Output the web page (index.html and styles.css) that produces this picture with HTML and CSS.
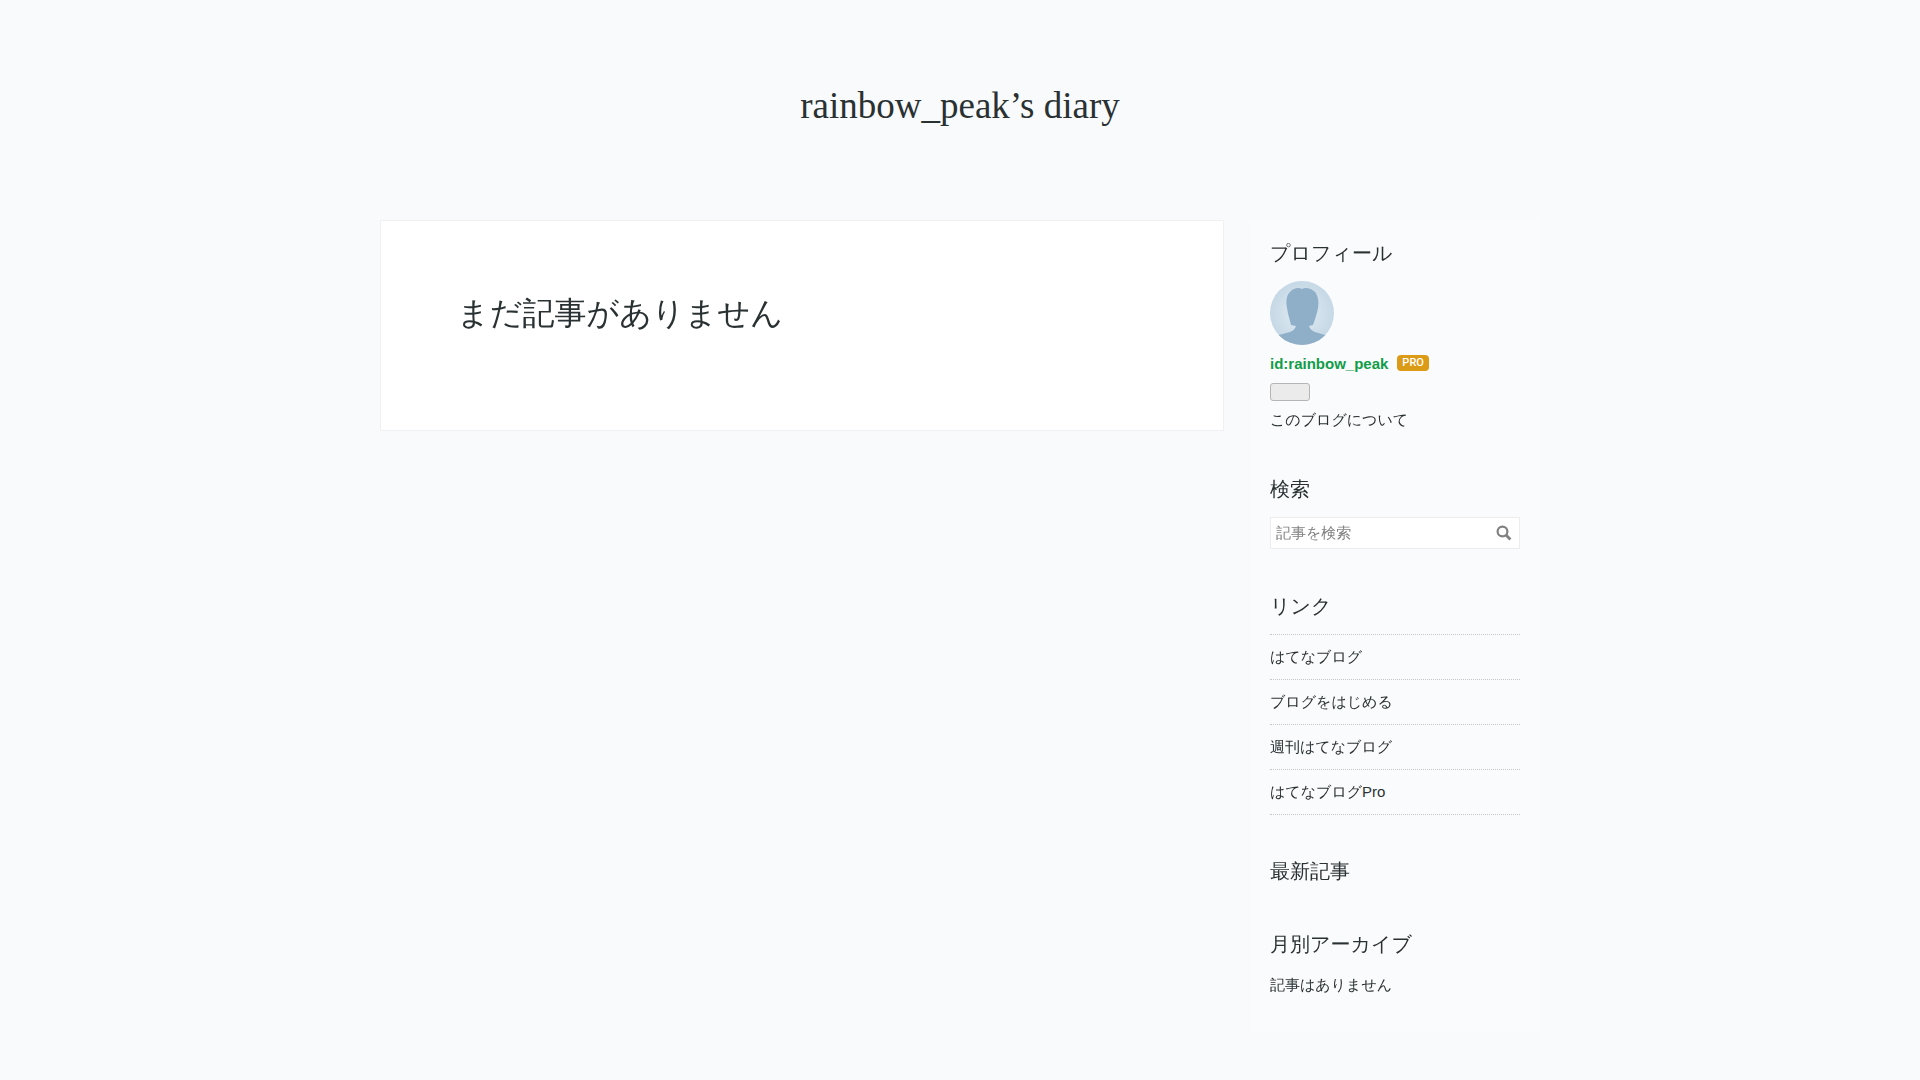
FILE: index.html
```html
<!DOCTYPE html>
<html lang="ja">

<head>
    <meta charset="UTF-8">
    <title>rainbow_peak’s diary</title>
    <link rel="stylesheet" href="styles.css">
</head>

<body>
    <header class="blog-title">
        <h1><a href="#">rainbow_peak’s diary</a></h1>
    </header>

    <div class="content">
        <main class="entry">
            <h2>まだ記事がありません</h2>
        </main>

        <aside class="sidebar">
            <section class="module">
                <h2><a href="#">プロフィール</a></h2>
                <a class="avatar" href="#" aria-label="rainbow_peak">
                    <svg viewBox="0 0 64 64" width="64" height="64">
                        <defs>
                            <radialGradient id="back">
                                <stop offset="0" stop-color="#e2edf3" />
                                <stop offset="1" stop-color="#c6d8e6" />
                            </radialGradient>
                        </defs>
                        <rect width="64" height="64" fill="url(#back)" />
                        <path fill="#8faec8" d="M32 8C29 6 23 7 20 11C16 15 16 21 17 27C18 34 20 39 21 44L26 45C25 48 23 50 20 51L9 54V64H55V54L45 51C42 50 40 48 39 45L43 44C45 38 47 33 48 27C49 20 48 15 45 11C41 7 35 6 32 8Z" />
                    </svg>
                </a>
                <p class="user"><a class="id" href="#">id:rainbow_peak</a><a class="pro" href="#">PRO</a></p>
                <button class="follow" type="button" aria-label="読者になる"></button>
                <p><a href="#">このブログについて</a></p>
            </section>

            <section class="module">
                <h2><label for="q">検索</label></h2>
                <form class="search">
                    <input type="text" id="q" name="q" placeholder="記事を検索">
                    <button type="submit" aria-label="検索">
                        <svg viewBox="0 0 16 16" width="16" height="16" fill="none" stroke="#808080">
                            <circle cx="6.5" cy="6.5" r="4.9" stroke-width="2.2" />
                            <path d="M10 10L14.4 14.4" stroke-width="2.8" />
                        </svg>
                    </button>
                </form>
            </section>

            <section class="module">
                <h2>リンク</h2>
                <ul class="links">
                    <li><a href="#">はてなブログ</a></li>
                    <li><a href="#">ブログをはじめる</a></li>
                    <li><a href="#">週刊はてなブログ</a></li>
                    <li><a href="#">はてなブログPro</a></li>
                </ul>
            </section>

            <section class="module">
                <h2><a href="#">最新記事</a></h2>
            </section>

            <section class="module">
                <h2><a href="#">月別アーカイブ</a></h2>
                <p>記事はありません</p>
            </section>
        </aside>
    </div>
</body>

</html>
```
FILE: styles.css
```css
* {
    box-sizing: border-box;
}

body {
    margin: 0;
    background-color: #f8fafc;
    color: #2a3132;
    font-family: "Liberation Sans", "WenQuanYi Zen Hei", sans-serif;
    font-size: 15px;
    line-height: 28px;
}

h1,
h2,
p,
ul {
    margin: 0;
    padding: 0;
    font-weight: normal;
}

a {
    color: inherit;
    text-decoration: none;
}

.blog-title {
    padding: 80px 20px 88px;
    text-align: center;
}

.blog-title h1 {
    font-family: "Liberation Serif", "Noto Sans CJK JP", serif;
    font-size: 37px;
    line-height: 52px;
}

.content {
    display: flex;
    align-items: flex-start;
    justify-content: space-between;
    gap: 26px;
    max-width: 1160px;
    margin: 0 auto 50px;
}

.entry {
    flex: 1;
    padding: 70px 76px 95px;
    border: 1px solid #eff1f2;
    background-color: white;
}

.entry h2 {
    font-size: 32px;
    line-height: 44px;
}

.sidebar {
    display: flex;
    flex-direction: column;
    gap: 43px;
    width: 290px;
    padding: 20px 20px 33px;
    background-color: #fafbfd;
}

.module h2 {
    margin-bottom: 15px;
    font-size: 20px;
    line-height: 26px;
}

.module h2:last-child {
    margin-bottom: 4px;
}

.module p {
    line-height: 26px;
}

.avatar {
    display: block;
    width: 64px;
    height: 64px;
    overflow: hidden;
    border-radius: 50%;
}

.avatar svg {
    display: block;
}

.user {
    display: flex;
    align-items: center;
    gap: 9px;
    padding-top: 6px;
}

.id {
    color: #119d48;
    font-weight: bold;
}

.pro {
    margin-bottom: 2px;
    padding: 0 5px;
    border-radius: 4px;
    background-color: #dc9b17;
    color: white;
    font-family: Roboto, sans-serif;
    font-size: 11px;
    font-weight: 500;
    line-height: 16px;
}

.follow {
    display: block;
    width: 40px;
    height: 18px;
    margin: 6px 0;
    border: 1px solid #b5b5b5;
    border-radius: 3px;
    background-color: #ebebeb;
}

.search {
    display: flex;
    height: 32px;
    margin-bottom: 1px;
    border: 1px solid #ebedef;
    background-color: white;
}

.search input {
    flex: 1;
    min-width: 0;
    padding: 0 5px;
    border: 0;
    background: none;
    font: inherit;
}

.search input::placeholder {
    color: #808080;
}

.search button {
    display: flex;
    align-items: center;
    padding: 0 7px;
    border: 0;
    background: none;
}

.links {
    border-top: 1px dotted #c4c6c8;
    list-style: none;
}

.links li {
    padding: 8px 0;
    border-bottom: 1px dotted #c4c6c8;
}
```
